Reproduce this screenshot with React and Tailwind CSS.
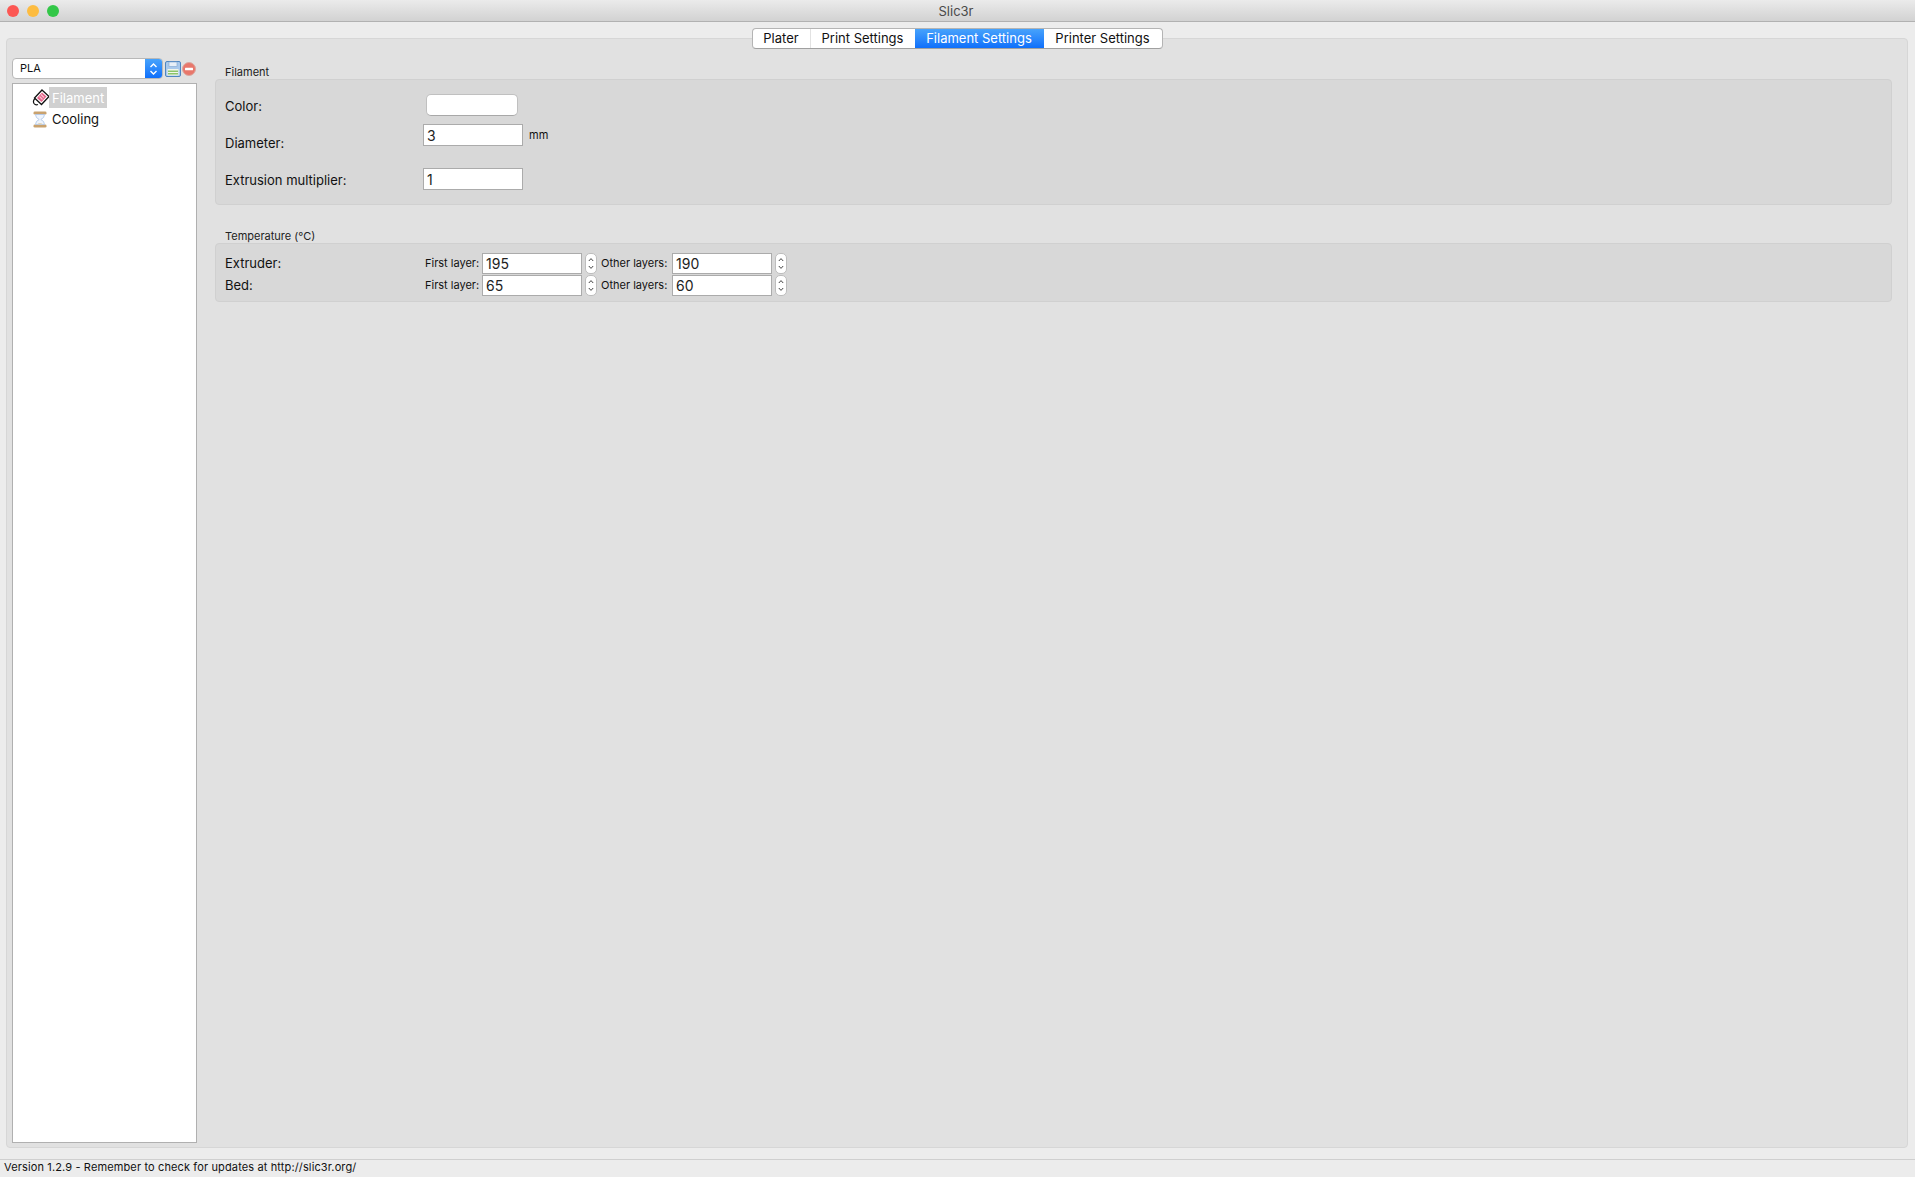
const font = { fontFamily: 'Inter' }

function FilamentIcon() {
  return (
    <svg width="18" height="18" viewBox="0 0 18 18" className="shrink-0">
      <path d="M10 1 L17 7.5 L9.5 15.5 L2.5 9 Z" fill="#fff" stroke="#111" strokeWidth="1.3" />
      <path d="M10 3.5 L14.5 7.5 L9.5 13 L5 9 Z" fill="#e4648a" />
      <path d="M9 5.5 L12 8.5 M7.5 7.5 L10.5 10.5" stroke="#f8c4d2" strokeWidth="1.1" />
      <path d="M3 9.5 Q0.5 12 2 14.5 Q3.5 16.5 6 15.5" fill="none" stroke="#111" strokeWidth="1.2" />
    </svg>
  )
}

function HourglassIcon() {
  return (
    <svg width="16" height="17" viewBox="0 0 16 17" className="shrink-0">
      <rect x="1.5" y="0.5" width="13" height="3" rx="1.3" fill="#c9a26e" />
      <rect x="1.5" y="13.5" width="13" height="3" rx="1.3" fill="#c9a26e" />
      <path d="M3.5 3.5 H12.5 Q12.5 7 8.8 8.5 Q12.5 10 12.5 13.5 H3.5 Q3.5 10 7.2 8.5 Q3.5 7 3.5 3.5 Z" fill="#eef4fd" stroke="#a9c3e6" strokeWidth="0.8" />
      <path d="M5 13.2 Q8 10.8 11 13.2 Z" fill="#e2d3b4" />
    </svg>
  )
}

function SaveIcon() {
  return (
    <svg width="16" height="16" viewBox="0 0 16 16" className="shrink-0">
      <rect x="0.5" y="0.5" width="15" height="15" rx="1.5" fill="#a9c9ec" stroke="#4f86c0" />
      <rect x="4" y="1" width="8" height="4.5" fill="#e8f0f8" stroke="#7ea6d0" strokeWidth="0.6" />
      <rect x="2.5" y="8" width="11" height="6.5" fill="#f2f6ea" />
      <path d="M3 10.2 H13 M3 12.8 H13" stroke="#8cc46a" strokeWidth="1.5" />
    </svg>
  )
}

function DeleteIcon() {
  return (
    <svg width="14" height="14" viewBox="0 0 14 14" className="shrink-0">
      <circle cx="7" cy="7" r="6.5" fill="#e8776b" stroke="#d9a8a0" />
      <rect x="3" y="5.7" width="8" height="2.6" rx="0.5" fill="#fff" />
    </svg>
  )
}

function Spinner() {
  return (
    <div className="ml-[3px] w-[12px] h-[21px] bg-white rounded-[5px] border border-[#bdbdbd] shrink-0">
      <svg width="10" height="19" viewBox="0 0 10 19" className="block">
        <path d="M2.8 7 L5 4.6 L7.2 7 M2.8 12 L5 14.4 L7.2 12" fill="none" stroke="#444" strokeWidth="1" />
      </svg>
    </div>
  )
}

function Input({ value, className }) {
  return (
    <div className={`bg-white border border-[#ababab] text-[14px] text-[#222] flex items-center pl-[3px] pt-[1px] shrink-0 ${className}`}>
      {value}
    </div>
  )
}

function TempRow({ label, first, other }) {
  return (
    <div className="flex items-center h-[22px]">
      <div className="w-[200px] text-[13px] text-[#111] pt-[1px]">{label}</div>
      <div className="w-[57px] text-[11px] text-[#111]">First layer:</div>
      <Input value={first} className="w-[100px] h-[21px]" />
      <Spinner />
      <div className="ml-[4px] w-[71px] text-[11px] text-[#111]">Other layers:</div>
      <Input value={other} className="w-[100px] h-[21px]" />
      <Spinner />
    </div>
  )
}

export default function App() {
  const tabs = [
    { name: 'Plater', w: 'w-[58px]' },
    { name: 'Print Settings', w: 'w-[104px]' },
    { name: 'Filament Settings', w: 'w-[129px]', active: true },
    { name: 'Printer Settings', w: 'w-[118px]' },
  ]

  return (
    <div className="h-[1177px] flex flex-col bg-[#ececec] overflow-hidden text-[#111]" style={font}>
      {/* title bar */}
      <div className="h-[22px] shrink-0 flex items-center bg-gradient-to-b from-[#ebebeb] to-[#d2d2d2] border-b border-[#b1b1b1]">
        <div className="flex gap-[8px] pl-[7px]">
          <div className="w-[12px] h-[12px] rounded-full bg-[#fc5753]" />
          <div className="w-[12px] h-[12px] rounded-full bg-[#fdbc40]" />
          <div className="w-[12px] h-[12px] rounded-full bg-[#33c748]" />
        </div>
        <div className="flex-1 text-center text-[13px] text-[#4a4a4a] pr-[62px] pt-[2px]">Slic3r</div>
      </div>

      {/* tab panel */}
      <div className="flex-1 pt-[16px] pl-[6px] pr-[7px] min-h-0">
        <div className="h-[1110px] bg-[#e1e1e1] border border-[#d6d6d6] rounded-[4px] flex flex-col">
          <div className="self-center -mt-[11px] h-[21px] flex bg-white rounded-[4px] border border-[#b4b4b4] border-b-[#a0a0a0] overflow-hidden shrink-0">
            {tabs.map(({ name, w, active }) => (
              <div
                key={name}
                className={`${w} flex items-center justify-center text-[13px] ${
                  active ? 'bg-gradient-to-b from-[#47a2fb] to-[#0e6ffb] text-white' : 'text-[#111]'
                } ${name === 'Plater' ? 'border-r border-[#e2e2e2]' : ''}`}
              >
                {name}
              </div>
            ))}
          </div>

          <div className="flex flex-1 min-h-0 pl-[5px] pr-[15px] pb-[4px] pt-[9px] gap-[18px]">
            {/* left column */}
            <div className="w-[185px] flex flex-col shrink-0">
              <div className="flex items-center h-[21px]">
                <div className="w-[151px] h-[21px] flex bg-white rounded-[4px] border border-[#b8b8b8] overflow-hidden">
                  <div className="flex-1 pl-[7px] text-[11px] flex items-center">PLA</div>
                  <div className="w-[17px] bg-gradient-to-b from-[#47a2fb] to-[#0e6ffb] flex items-center justify-center">
                    <svg width="9" height="14" viewBox="0 0 9 14">
                      <path d="M1.5 5 L4.5 2 L7.5 5 M1.5 9 L4.5 12 L7.5 9" fill="none" stroke="#fff" strokeWidth="1.4" />
                    </svg>
                  </div>
                </div>
                <div className="ml-[2px] flex items-center gap-[1px]">
                  <SaveIcon />
                  <DeleteIcon />
                </div>
              </div>
              <div className="mt-[4px] flex-1 bg-white border border-[#b0b0b0] pt-[3px] pl-[19px]">
                <div className="flex items-center h-[21px]">
                  <FilamentIcon />
                  <div className="ml-[-1px] h-[21px] w-[58px] bg-[#d0d0d0] text-white text-[13px] flex items-center pl-[3px] pt-[2px]">Filament</div>
                </div>
                <div className="flex items-center h-[23px] gap-[4px]">
                  <HourglassIcon />
                  <div className="text-[13px] pt-[1px]">Cooling</div>
                </div>
              </div>
            </div>

            {/* right column */}
            <div className="flex-1 flex flex-col min-w-0 pt-[8px]">
              <div className="pl-[10px] h-[13px] text-[11px] leading-[13px] text-[#222]">Filament</div>
              <div className="h-[126px] bg-[#d8d8d8] border border-[#d0d0d0] rounded-[4px] pl-[9px] pt-[14px]">
                <div className="flex items-center h-[22px]">
                  <div className="w-[201px] text-[13px] pt-[3px]">Color:</div>
                  <div className="w-[92px] h-[22px] bg-white rounded-[5px] border border-[#c0c0c0] border-b-[#a8a8a8]" />
                </div>
                <div className="mt-[8px] flex h-[22px]">
                  <div className="w-[198px] text-[13px] pt-[11px] leading-[16px]">Diameter:</div>
                  <Input value="3" className="w-[100px] h-[22px]" />
                  <div className="ml-[6px] text-[11px] pt-[3px] leading-[16px]">mm</div>
                </div>
                <div className="mt-[22px] flex items-center h-[22px]">
                  <div className="w-[198px] text-[13px] pt-[3px]">Extrusion multiplier:</div>
                  <Input value="1" className="w-[100px] h-[22px]" />
                </div>
              </div>

              <div className="mt-[25px] pl-[10px] h-[13px] text-[11px] leading-[13px] text-[#222]">Temperature (°C)</div>
              <div className="h-[59px] bg-[#d8d8d8] border border-[#d0d0d0] rounded-[4px] pl-[9px] pt-[8px]">
                <TempRow label="Extruder:" first="195" other="190" />
                <TempRow label="Bed:" first="65" other="60" />
              </div>
            </div>
          </div>
        </div>
      </div>

      {/* status bar */}
      <div className="h-[18px] shrink-0 border-t border-[#cfcfcf] pl-[4px] text-[11px] tracking-[0.13px] leading-[15px] text-[#111] bg-[#ececec]">
        Version 1.2.9 - Remember to check for updates at http://slic3r.org/
      </div>
    </div>
  )
}
